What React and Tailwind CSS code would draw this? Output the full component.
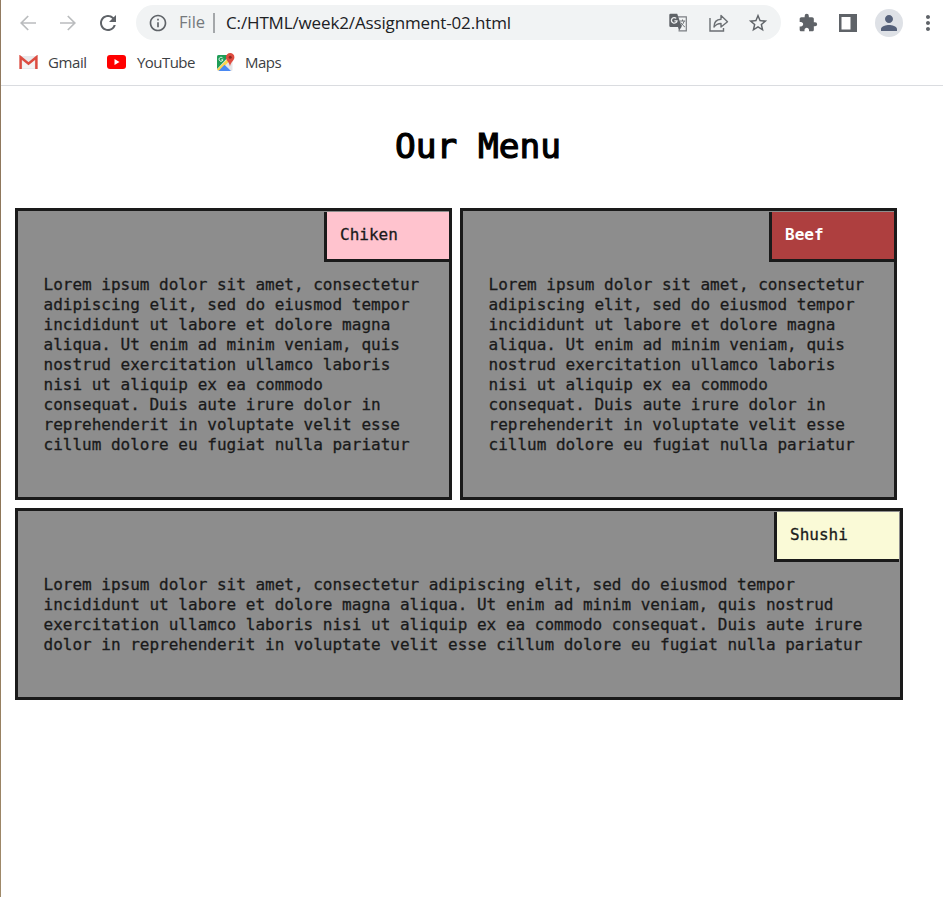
import React from "react";
import { MdExtension, MdPerson, MdStarBorder, MdRefresh, MdInfoOutline, MdMoreVert } from "react-icons/md";

const MONO = "font-['DejaVu_Sans_Mono',monospace]";

const LINES = [
  "Lorem ipsum dolor sit amet, consectetur",
  "adipiscing elit, sed do eiusmod tempor",
  "incididunt ut labore et dolore magna",
  "aliqua. Ut enim ad minim veniam, quis",
  "nostrud exercitation ullamco laboris",
  "nisi ut aliquip ex ea commodo",
  "consequat. Duis aute irure dolor in",
  "reprehenderit in voluptate velit esse",
  "cillum dolore eu fugiat nulla pariatur",
];

const WIDE_LINES = [
  "Lorem ipsum dolor sit amet, consectetur adipiscing elit, sed do eiusmod tempor",
  "incididunt ut labore et dolore magna aliqua. Ut enim ad minim veniam, quis nostrud",
  "exercitation ullamco laboris nisi ut aliquip ex ea commodo consequat. Duis aute irure",
  "dolor in reprehenderit in voluptate velit esse cillum dolore eu fugiat nulla pariatur",
];

function Arrow({ flip }) {
  return (
    <svg className={flip ? "h-4 w-4 shrink-0 rotate-180" : "h-4 w-4 shrink-0"} viewBox="0 0 16 16" fill="none" stroke="#babcbe" strokeWidth="1.7">
      <path d="M16 8H1.2M8.2 1L1.2 8l7 7" />
    </svg>
  );
}

function Toolbar() {
  return (
    <div className="flex h-[45px] items-center pl-5">
      <Arrow />
      <div className="w-6" />
      <Arrow flip />
      <MdRefresh className="ml-5 h-6 w-6 shrink-0 text-[#5f6368]" />
      <div className="ml-4 flex h-[35px] w-[645px] shrink-0 items-center rounded-full bg-[#f1f3f4] pl-3">
        <MdInfoOutline className="h-5 w-5 shrink-0 text-[#5f6368]" />
        <span className="ml-[11px] w-[27px] whitespace-nowrap text-[16.5px] text-[#75797d]">File</span>
        <span className="ml-[7px] h-5 w-0.5 bg-[#a4a7aa]" />
        <span className="ml-[11px] w-[285px] whitespace-nowrap text-[17px] tracking-[-0.14px] text-[#202124]">
          C:/HTML/week2/Assignment-02.html
        </span>
        <svg className="ml-[158px] h-[19px] w-[19px] shrink-0" viewBox="0 0 19 19" fill="none">
          <path d="M9 3.8h8.3v14H9.5" stroke="#7b7e82" strokeWidth="1.2" />
          <path d="M1.5.8h6.7L12.8 14H1.5Q.3 14 .3 12.8V2Q.3.8 1.5.8zM9 14l1 3.8 2.5-3.8z" fill="#5f6368" />
          <path d="M7.200 5.400a2.800 2.800 0 1 0 .8 2.400H5.400" stroke="#f1f3f4" strokeWidth="1.3" />
          <path d="M10.800 8h5.400M13.500 6.500V8M15.300 8q-.9 3-3.500 5M11.700 9.500q1.700 2.800 4.200 4.500" stroke="#6f7377" strokeWidth="1" />
        </svg>
        <svg className="ml-[21px] h-5 w-5 shrink-0" viewBox="0 0 20 20" fill="none" stroke="#6b6f73" strokeWidth="1.4">
          <path d="M1 5v13h13.5v-3" />
          <path d="M5 14c0-5 3-7.500 7-7.700V2.500L18.500 8.700 12 14v-3.500C9 10.500 7 11.300 5 14z" strokeLinejoin="round" />
        </svg>
        <MdStarBorder className="ml-[18px] h-[22px] w-[22px] shrink-0 text-[#5f6368]" />
      </div>
      <MdExtension className="ml-[17px] h-5 w-5 shrink-0 text-[#5f6368]" />
      <svg className="ml-[21px] h-[18px] w-[18px] shrink-0" viewBox="0 0 18 18">
        <path d="M0 0h18v18H0zM2.500 3v12.500h9V3z" fill="#5f6368" fillRule="evenodd" />
      </svg>
      <span className="ml-[18px] flex h-7 w-7 shrink-0 items-center justify-center rounded-full bg-[#dee1e6]">
        <MdPerson className="h-6 w-6 text-[#55617a]" />
      </span>
      <MdMoreVert className="ml-[13px] h-6 w-6 shrink-0 text-[#5f6368]" />
    </div>
  );
}

function Bookmarks() {
  return (
    <div className="flex h-[41px] items-center border-b border-[#dadce0] pb-1.5 pl-[19px] text-[15px] text-[#3c4043]">
      <svg className="h-[15px] w-[19px] shrink-0" viewBox="0 0 19 15">
        <path d="M2 1h15v13H2z" fill="#e9eaec" />
        <path d="M2.800 13V3.500L9.500 9l6.700-5.500V13" fill="#f4f4f4" stroke="#d8d8d8" strokeWidth=".5" />
        <path d="M1.600 14V2.200L9.500 8.700l7.900-6.500V14" fill="none" stroke="#dc4c40" strokeWidth="2.500" />
      </svg>
      <span className="ml-[10px] w-[38px] whitespace-nowrap tracking-[-0.4px]">Gmail</span>
      <svg className="ml-[21px] h-[14px] w-[19px] shrink-0" viewBox="0 0 19 14">
        <rect width="19" height="14" rx="3" fill="#f00" />
        <path d="M7.500 4v6l5-3z" fill="#fff" />
      </svg>
      <span className="ml-[11px] w-[57px] whitespace-nowrap tracking-[-0.55px]">YouTube</span>
      <svg className="ml-[22px] h-[19px] w-[19px] shrink-0" viewBox="0 0 19 19">
        <rect x="1" y="2" width="15.500" height="16" rx="1.500" fill="#e4e5e7" />
        <path d="M1 16V3.500Q1 2 2.500 2H14L1 16z" fill="#1f9d57" />
        <path d="M1 16.500L13.500 4l2 2L3.500 18z" fill="#fdd64b" />
        <path d="M2.500 18l6-6.300 6.500 6.300z" fill="#4a89f3" />
        <path d="M6.800 5.300a2 2 0 1 0 .2 1.500H5.300" fill="none" stroke="#fff" strokeWidth=".9" />
        <path d="M14 13.500C13.500 9 10 8 10 4.300a4.200 4.200 0 0 1 8.400 0C18.400 8 14.500 9 14 13.500z" fill="#df4c40" />
        <circle cx="14.200" cy="4.300" r="1.500" fill="#8b2820" />
      </svg>
      <span className="ml-[10px] whitespace-nowrap tracking-[-0.5px]">Maps</span>
    </div>
  );
}

function Card({ title, tagClass, lines, wide }) {
  return (
    <section
      className={
        "flex shrink-0 flex-col border-[3px] border-[#1a1a1a] bg-[#8d8d8d] text-[#1a1a1a] " +
        (wide ? "h-48 w-[888px]" : "h-[292px] w-[437px]")
      }
    >
      <div
        className={
          "mt-px flex h-[50px] w-[125px] items-center self-end border-b-[3px] border-l-[3px] border-[#1a1a1a] pl-[13px] text-[16px] leading-5 " +
          (wide ? "mr-px " : "") +
          tagClass
        }
      >
        <h2 className="-mt-px">{title}</h2>
      </div>
      <div className="ml-[25.5px] mt-[13px] whitespace-nowrap text-[16px] leading-5 [-webkit-text-stroke:0.3px_#1a1a1a]">
        {lines.map((line) => (
          <p key={line}>{line}</p>
        ))}
      </div>
    </section>
  );
}

export default function App() {
  return (
    <div className="flex h-[897px] w-[943px] overflow-hidden bg-white">
      <div className="w-px shrink-0 bg-linear-to-b from-[#927b61] via-[#8b7355] to-[#a08a6a]" />
      <div className="min-w-0 flex-1">
        <header className="font-['Open_Sans',sans-serif]">
          <div className="-ml-px pl-px">
            <div className="-ml-px">
              <Toolbar />
            </div>
            <div className="[&>div]:pl-[18px]">
              <Bookmarks />
            </div>
          </div>
        </header>
        <main className={"pl-[14px] " + MONO}>
          <h1 className="w-[926px] pt-10 text-center text-[34.5px] leading-10 text-black [-webkit-text-stroke:1.2px_black]">
            Our Menu
          </h1>
          <div className="mt-[42px] flex flex-wrap gap-2">
            <Card title="Chiken" tagClass="bg-[#ffc3ce] [-webkit-text-stroke:0.3px_#1a1a1a]" lines={LINES} />
            <Card title="Beef" tagClass="bg-[#ae3f3f] font-bold text-white" lines={LINES} />
            <Card title="Shushi" tagClass="bg-[#fafad7] [-webkit-text-stroke:0.3px_#1a1a1a]" lines={WIDE_LINES} wide />
          </div>
        </main>
      </div>
    </div>
  );
}
